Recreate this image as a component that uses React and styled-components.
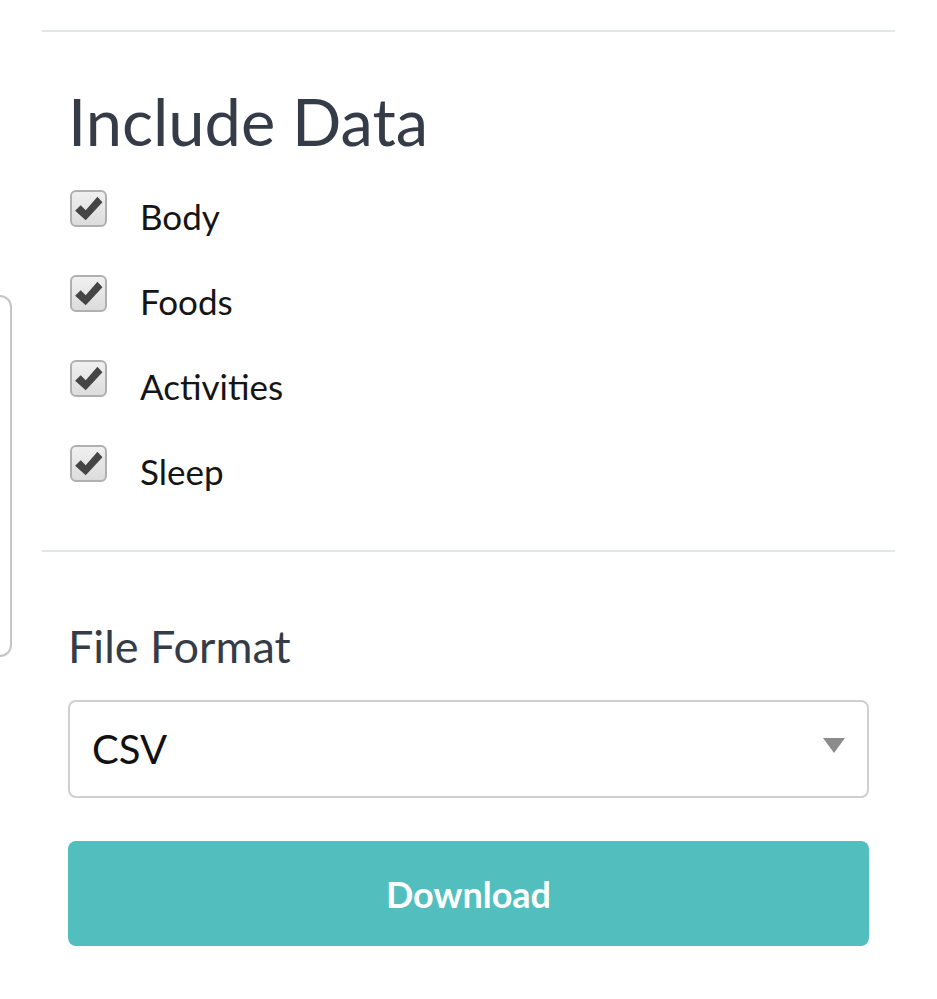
import React from "react";
import styled, { createGlobalStyle } from "styled-components";

const GlobalStyle = createGlobalStyle`
  body {
    margin: 0;
    background: #ffffff;
    font-family: Lato, "Open Sans", sans-serif;
  }
`;

const Page = styled.div`
  display: flex;
  align-items: flex-start;
  width: 937px;
  height: 999px;
  overflow: hidden;
`;

const SideCard = styled.div`
  flex: none;
  width: 10px;
  height: 358px;
  margin-top: 295px;
  border: 2px solid #c4c4c4;
  border-left: none;
  border-radius: 0 12px 12px 0;
`;

const Main = styled.div`
  width: 853px;
  margin-left: 30px;
  padding-top: 30px;
`;

const Divider = styled.hr`
  margin: 0;
  border: none;
  border-top: 2px solid #e3e6e6;
`;

const Section = styled.section`
  padding: 0 26px;
`;

const Title = styled.h2`
  margin: ${({ $top }) => $top}px 0 0;
  font-weight: 400;
  font-size: ${({ $size }) => $size}px;
  line-height: 1;
  color: #353c47;
`;

const CheckList = styled.ul`
  list-style: none;
  margin: 41px 0 0;
  padding: 0 0 0 2px;
  display: flex;
  flex-direction: column;
  gap: 48px;
  padding-bottom: 63px;
`;

const CheckRow = styled.li`
  display: flex;
  align-items: center;
  gap: 33px;
`;

const Box = styled.span`
  flex: none;
  display: flex;
  align-items: center;
  justify-content: center;
  width: 33px;
  height: 33px;
  border: 2px solid #b0b0b0;
  border-radius: 6px;
  background: linear-gradient(#f0f0f0, #dcdcdc);
  position: relative;
  top: -5px;
`;

const Label = styled.span`
  font-size: 35px;
  color: #151515;
  line-height: 1;
  position: relative;
  top: 3px;
`;

const Select = styled.div`
  display: flex;
  align-items: center;
  justify-content: space-between;
  height: 94px;
  margin-top: 31px;
  padding: 0 22px 0 22px;
  border: 2px solid #cfcfcf;
  border-radius: 8px;
  background: #fff;
  font-size: 40px;
  color: #111;
`;

const Arrow = styled.span`
  width: 0;
  height: 0;
  border-left: 11px solid transparent;
  border-right: 11px solid transparent;
  border-top: 15px solid #8c8c8c;
  margin-top: -8px;
`;

const Button = styled.button`
  display: block;
  width: 100%;
  height: 105px;
  margin-top: 43px;
  border: none;
  border-radius: 8px;
  background: #52bfbe;
  color: #ffffff;
  font-family: Lato, "Open Sans", sans-serif;
  font-weight: 700;
  font-size: 36px;
  cursor: pointer;
`;

const items = ["Body", "Foods", "Activities", "Sleep"];

const Check = () => (
  <svg width="29" height="27" viewBox="0 0 26 24">
    <path d="M1 14 L6 9 L10.5 13.5 L21 1.5 L25.5 6.5 L10.5 22.5 Z" fill="#454545" />
  </svg>
);

const App = () => (
  <Page>
    <GlobalStyle />
    <SideCard />
    <Main>
      <Divider />
      <Section>
        <Title $size={65} $top={57}>Include Data</Title>
        <CheckList>
          {items.map(item => (
            <CheckRow key={item}>
              <Box>
                <Check />
              </Box>
              <Label>{item}</Label>
            </CheckRow>
          ))}
        </CheckList>
      </Section>
      <Divider />
      <Section>
        <Title $size={45} $top={72}>File Format</Title>
        <Select>
          <span>CSV</span>
          <Arrow />
        </Select>
        <Button>Download</Button>
      </Section>
    </Main>
  </Page>
);

export default App;
